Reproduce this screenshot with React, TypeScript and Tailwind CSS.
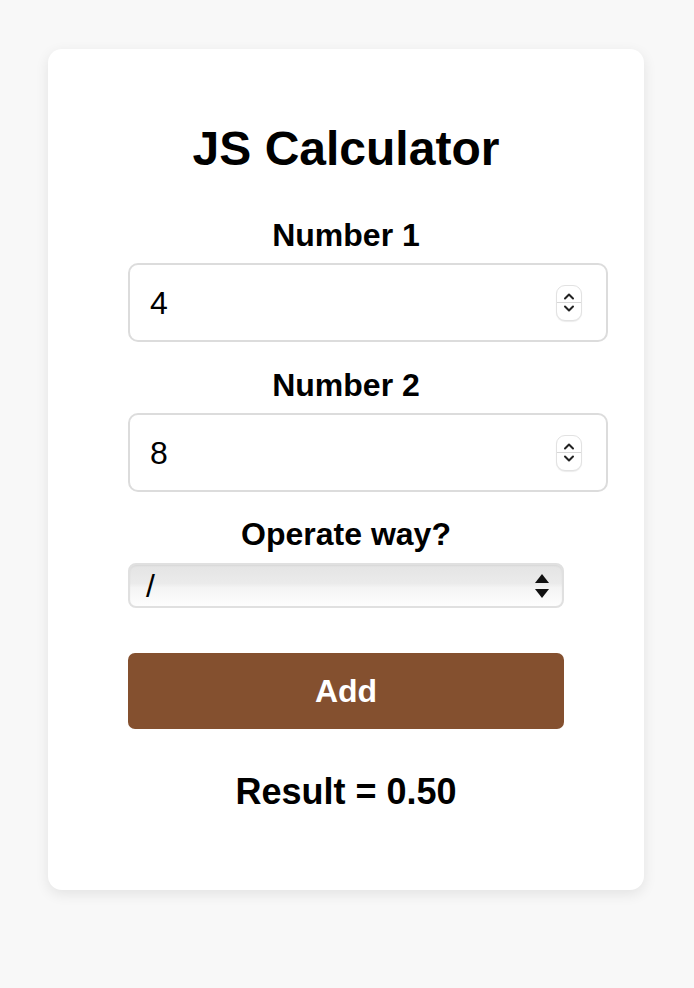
import React from "react";

function Spinner() {
  return (
    <div className="absolute right-[24px] top-1/2 -translate-y-1/2 w-[26px] h-[36px] rounded-[9px] border border-[#e2e2e2] bg-white flex flex-col items-center justify-center shadow-[0_1px_1px_rgba(0,0,0,0.08)]">
      <svg width="14" height="9" viewBox="0 0 14 9" className="mb-[1px]">
        <path d="M3 6.5 L7 2.5 L11 6.5" fill="none" stroke="#222" strokeWidth="2" strokeLinecap="round" strokeLinejoin="round" />
      </svg>
      <div className="w-full h-px bg-[#d8d8d8]" />
      <svg width="14" height="9" viewBox="0 0 14 9" className="mt-[1px]">
        <path d="M3 2.5 L7 6.5 L11 2.5" fill="none" stroke="#222" strokeWidth="2" strokeLinecap="round" strokeLinejoin="round" />
      </svg>
    </div>
  );
}

function NumberField({ value }: { value: string }) {
  return (
    <div className="relative w-[480px] h-[79px] border-2 border-[#dcdcdc] rounded-[10px] bg-white flex items-center pl-[20px] text-[32px] text-black">
      {value}
      <Spinner />
    </div>
  );
}

export default function App() {
  return (
    <div
      className="min-h-[988px] bg-[#f8f8f8] pt-[49px] pl-[48px]"
      style={{ fontFamily: '"Liberation Sans", Arial, sans-serif' }}
    >
      <div className="w-[596px] h-[841px] bg-white rounded-[14px] shadow-[0_4px_14px_rgba(0,0,0,0.09)] px-[80px] pt-[72px] flex flex-col">
        <h1 className="text-center text-[48px] font-bold leading-[56px] text-black">JS Calculator</h1>
        <div className="mt-[38px] text-center text-[32px] font-bold leading-[40px]">Number 1</div>
        <div className="mt-[8px]">
          <NumberField value="4" />
        </div>
        <div className="mt-[23px] text-center text-[32px] font-bold leading-[40px]">Number 2</div>
        <div className="mt-[8px]">
          <NumberField value="8" />
        </div>
        <div className="mt-[22px] text-center text-[32px] font-bold leading-[40px]">Operate way?</div>
        <div className="mt-[9px] relative w-[436px] h-[45px] rounded-[8px] border-2 border-[#e0e0e0] bg-[linear-gradient(to_bottom,#e4e4e4_0%,#ebebeb_45%,#f4f4f4_55%,#fdfdfd_100%)] shadow-[inset_0_1px_2px_rgba(0,0,0,0.06)] flex items-center pl-[16px] text-[32px] text-black">
          /
          <svg width="16" height="28" viewBox="0 0 16 28" className="absolute right-[12px] top-1/2 -translate-y-1/2">
            <path d="M1 11 L8 2 L15 11 Z" fill="#111" />
            <path d="M1 17 L8 26 L15 17 Z" fill="#111" />
          </svg>
        </div>
        <button className="mt-[45px] w-[436px] h-[76px] rounded-[7px] bg-[#84502f] text-white text-[32px] font-bold">
          Add
        </button>
        <div className="mt-[41px] text-center text-[36px] font-bold leading-[44px]">Result = 0.50</div>
      </div>
    </div>
  );
}
